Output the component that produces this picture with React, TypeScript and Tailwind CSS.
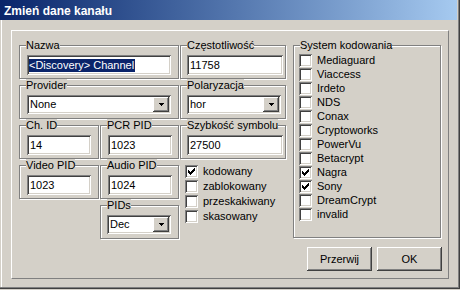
// Zmień dane kanału — classic Windows 2000 style channel edit dialog.
import type { ReactNode } from "react"

const sunken =
  "shadow-[inset_1px_1px_0_#808080,inset_-1px_-1px_0_#ffffff,inset_2px_2px_0_#404040,inset_-2px_-2px_0_#d4d0c8]"
const raised =
  "shadow-[inset_-1px_-1px_0_#404040,inset_1px_1px_0_#ffffff,inset_-2px_-2px_0_#808080,inset_2px_2px_0_#d4d0c8]"

// Etched group box; the legend sits on the top line.
function Group({ label, className, children }: { label: string; className: string; children?: ReactNode }) {
  return (
    <fieldset className={`border border-[#808080] shadow-[inset_1px_1px_0_#ffffff,1px_1px_0_#ffffff] ${className}`}>
      <legend className="ml-[6px] bg-[#d4d0c8] leading-[12px]">{label}</legend>
      {children}
    </fieldset>
  )
}

function TextBox({ value, className, selected = false }: { value: string; className: string; selected?: boolean }) {
  return (
    <div className={`flex h-[20px] items-center bg-white px-[2px] leading-[13px] ${sunken} ${className}`}>
      {selected ? (
        <span className="bg-[#0a246a] pr-[1px] text-white">{value}</span>
      ) : (
        <span className="pl-[1px]">{value}</span>
      )}
    </div>
  )
}

function Combo({ value, className }: { value: string; className: string }) {
  return (
    <div className={`flex h-[19px] items-stretch bg-white p-[2px] leading-[13px] ${sunken} ${className}`}>
      <span className="flex flex-1 items-center pl-[1px]">{value}</span>
      <span className={`flex w-[16px] items-center justify-center bg-[#d4d0c8] ${raised}`}>
        <svg width="5" height="3" viewBox="0 0 5 3" shapeRendering="crispEdges">
          <rect x="0" y="0" width="5" height="1" fill="#000" />
          <rect x="1" y="1" width="3" height="1" fill="#000" />
          <rect x="2" y="2" width="1" height="1" fill="#000" />
        </svg>
      </span>
    </div>
  )
}

function CheckMark() {
  // 7x7 pixel tick, as drawn by the classic theme
  const rows: [number, number, number][] = [
    [0, 6, 1],
    [1, 5, 2],
    [2, 0, 1],
    [2, 4, 3],
    [3, 0, 2],
    [3, 3, 3],
    [4, 0, 5],
    [5, 1, 3],
    [6, 2, 1],
  ]
  return (
    <svg width="7" height="7" viewBox="0 0 7 7" shapeRendering="crispEdges">
      {rows.map(([y, x, w], i) => (
        <rect key={i} x={x} y={y} width={w} height="1" fill="#000" />
      ))}
    </svg>
  )
}

function Check({ label, checked = false, className }: { label: string; checked?: boolean; className: string }) {
  return (
    <div className={`flex items-center leading-[13px] ${className}`}>
      <span className={`flex h-[13px] w-[13px] shrink-0 items-center justify-center bg-white ${sunken}`}>
        {checked && <CheckMark />}
      </span>
      <span className="ml-[5px]">{label}</span>
    </div>
  )
}

function Button({ label }: { label: string }) {
  return (
    <button className={`flex h-[24px] w-[65px] items-center justify-center bg-[#d4d0c8] ${raised}`}>{label}</button>
  )
}

const systems: [string, boolean][] = [
  ["Mediaguard", false],
  ["Viaccess", false],
  ["Irdeto", false],
  ["NDS", false],
  ["Conax", false],
  ["Cryptoworks", false],
  ["PowerVu", false],
  ["Betacrypt", false],
  ["Nagra", true],
  ["Sony", true],
  ["DreamCrypt", false],
  ["invalid", false],
]

export default function App() {
  return (
    <div className="h-[290px] w-[460px] bg-[#d4d0c8] pb-[1px] font-['Liberation_Sans',Arial,sans-serif] text-[11px] text-black">
      <div className="h-full border-r border-b border-[#404040]">
        <div className="flex h-full flex-col border-r border-b border-[#808080] pr-[1px]">
          <div className="flex h-[20px] shrink-0 items-center bg-gradient-to-r from-[#0a246a] to-[#a6caf0] pt-[1px] pl-[4px] text-[12px] font-bold text-white">
            Zmień dane kanału
          </div>
          <div className="ml-[1px] flex-1 border-l border-white pt-[10px] pr-[8px] pb-[8px] pl-[9px]">
            <div className="flex h-full border-t border-l border-white border-r-[#808080] border-b-[#808080] border-r border-b pt-[8px] pl-[7px]">
              {/* left column */}
              <div className="flex w-[160px] flex-col">
                <Group label="Nazwa" className="h-[40px] w-[160px]">
                  <div className="pt-[4px] pl-[7px]">
                    <TextBox value="<Discovery> Channel" selected className="w-[144px]" />
                  </div>
                </Group>
                <Group label="Provider" className="h-[40px] w-[160px]">
                  <div className="pt-[4px] pl-[7px]">
                    <Combo value="None" className="w-[144px]" />
                  </div>
                </Group>
                <div className="flex gap-[1px]">
                  <Group label="Ch. ID" className="h-[40px] w-[80px]">
                    <div className="pt-[4px] pl-[7px]">
                      <TextBox value="14" className="w-[64px]" />
                    </div>
                  </Group>
                  <Group label="PCR PID" className="h-[40px] w-[79px]">
                    <div className="pt-[4px] pl-[7px]">
                      <TextBox value="1023" className="w-[64px]" />
                    </div>
                  </Group>
                </div>
                <div className="flex gap-[1px]">
                  <Group label="Video PID" className="h-[40px] w-[80px]">
                    <div className="pt-[4px] pl-[7px]">
                      <TextBox value="1023" className="w-[64px]" />
                    </div>
                  </Group>
                  <Group label="Audio PID" className="h-[40px] w-[79px]">
                    <div className="pt-[4px] pl-[7px]">
                      <TextBox value="1024" className="w-[64px]" />
                    </div>
                  </Group>
                </div>
                <div className="flex pl-[81px]">
                  <Group label="PIDs" className="h-[40px] w-[79px]">
                    <div className="pt-[4px] pl-[6px]">
                      <Combo value="Dec" className="w-[64px]" />
                    </div>
                  </Group>
                </div>
              </div>

              {/* middle column */}
              <div className="ml-[1px] flex w-[106px] flex-col">
                <Group label="Częstotliwość" className="h-[40px] w-[106px]">
                  <div className="pt-[4px] pl-[6px]">
                    <TextBox value="11758" className="w-[96px]" />
                  </div>
                </Group>
                <Group label="Polaryzacja" className="h-[40px] w-[106px]">
                  <div className="pt-[4px] pl-[6px]">
                    <Combo value="hor" className="w-[94px]" />
                  </div>
                </Group>
                <Group label="Szybkość symbolu" className="h-[40px] w-[106px]">
                  <div className="pt-[4px] pl-[6px]">
                    <TextBox value="27500" className="w-[96px]" />
                  </div>
                </Group>
                <div className="flex flex-col pt-[5px] pl-[5px]">
                  <Check label="kodowany" checked className="h-[15px]" />
                  <Check label="zablokowany" className="h-[15px]" />
                  <Check label="przeskakiwany" className="h-[15px]" />
                  <Check label="skasowany" className="h-[15px]" />
                </div>
              </div>

              {/* right column */}
              <div className="ml-[7px] flex w-[149px] flex-col">
                <Group label="System kodowania" className="h-[199px] w-[148px]">
                  <div className="flex flex-col pt-[2px] pl-[5px]">
                    {systems.map(([name, on]) => (
                      <Check key={name} label={name} checked={on} className="h-[14px]" />
                    ))}
                  </div>
                </Group>
                <div className="mt-[9px] flex justify-end gap-[5px]">
                  <Button label="Przerwij" />
                  <Button label="OK" />
                </div>
              </div>
            </div>
          </div>
        </div>
      </div>
    </div>
  )
}
